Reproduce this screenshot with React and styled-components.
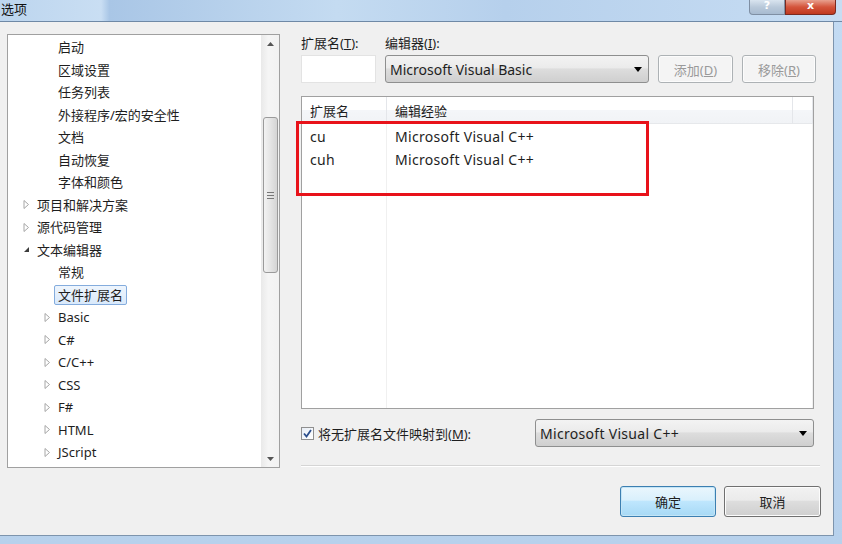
import React from 'react';
import styled, { createGlobalStyle } from 'styled-components';

const GlobalStyle = createGlobalStyle`
  html, body {
    margin: 0;
    padding: 0;
    width: 842px;
    height: 544px;
    overflow: hidden;
    font-family: "Noto Sans", "Noto Sans CJK SC", sans-serif;
    font-size: 13px;
    color: #1e1e1e;
  }
`;

const Frame = styled.div`
  width: 842px;
  height: 544px;
  background: linear-gradient(180deg, #c3dbf3 0%, #b7d1ec 100%);
  display: flex;
  flex-direction: column;
  overflow: hidden;
`;

const TitleBar = styled.div`
  height: 21px;
  display: flex;
  align-items: flex-start;
  justify-content: space-between;
  background: linear-gradient(90deg, #bcd5ee 0%, #c9def3 12%, #a9c6e6 13%, #c4dbf1 40%, #b6d0ec 60%, #c7ddf3 100%);
  border-bottom: 1px solid #6f89a6;
`;

const Title = styled.span`
  font-size: 13px;
  line-height: 18px;
  color: #111;
  margin-left: 1px;
`;

const CaptionButtons = styled.div`
  display: flex;
  margin-right: 6px;
`;

const CaptionButton = styled.div`
  width: ${p => p.$w}px;
  height: 14px;
  border: 1px solid ${p => (p.$close ? '#7a2a20' : '#7f8fa3')};
  border-top: none;
  border-radius: ${p => (p.$close ? '0 0 4px 0' : '0 0 0 4px')};
  background: ${p => (p.$close
    ? 'linear-gradient(180deg, #e8a08e 0%, #d4543b 50%, #c0391f 100%)'
    : 'linear-gradient(180deg, #d9e4ef 0%, #b9c9da 50%, #a8bbd0 100%)')};
  color: #fff;
  font-size: 11px;
  font-weight: bold;
  line-height: 12px;
  text-align: center;
  font-family: "DejaVu Sans", sans-serif;
`;

const Body = styled.div`
  flex: 0 0 514px;
  width: 834px;
  background: #f0f0f0;
  border-right: 1px solid #7d94ad;
  border-bottom: 1px solid #7d94ad;
  display: flex;
  padding: 12px 0 0 7px;
  box-sizing: border-box;
  gap: 21px;
`;

const TreePanel = styled.div`
  width: 273px;
  height: 434px;
  border: 1px solid #a0a0a0;
  background: #fff;
  display: flex;
  box-sizing: border-box;
`;

const TreeList = styled.div`
  flex: 1;
  padding-top: 1px;
  overflow: hidden;
`;

const TreeRow = styled.div`
  height: 22.5px;
  display: flex;
  align-items: center;
  padding-left: ${p => p.$indent}px;
  white-space: nowrap;
`;

const Arrow = styled.span`
  width: 13px;
  display: inline-flex;
  justify-content: center;
  align-items: center;
  margin-right: ${p => p.$gap}px;
`;

const TreeLabel = styled.span`
  padding: 1px 3px;
  margin-left: -4px;
  border: 1px solid ${p => (p.$selected ? '#84acdd' : 'transparent')};
  border-radius: 2px;
  background: ${p => (p.$selected ? 'linear-gradient(180deg, #eef5fd 0%, #d9e9fb 100%)' : 'transparent')};
  line-height: 16px;
`;

const ScrollBar = styled.div`
  width: 18px;
  background: linear-gradient(90deg, #e9e9e9 0%, #f5f5f5 40%, #f2f2f2 100%);
  display: flex;
  flex-direction: column;
  align-items: center;
`;

const ScrollArrow = styled.div`
  height: 17px;
  display: flex;
  align-items: center;
  justify-content: center;
  width: 100%;
`;

const ScrollTrack = styled.div`
  flex: 1;
  width: 100%;
  display: flex;
  flex-direction: column;
  align-items: center;
  padding-top: 65px;
  box-sizing: border-box;
`;

const Thumb = styled.div`
  width: 15px;
  height: 156px;
  border: 1px solid #9a9a9a;
  border-radius: 3px;
  background: linear-gradient(90deg, #f2f2f2 0%, #e4e4e4 50%, #d4d4d4 100%);
  box-sizing: border-box;
  display: flex;
  align-items: center;
  justify-content: center;
`;

const Grip = styled.div`
  width: 7px;
  height: 7px;
  background: repeating-linear-gradient(180deg, #777 0 1px, transparent 1px 3px);
`;

const RightPanel = styled.div`
  width: 520px;
  display: flex;
  flex-direction: column;
`;

const TopRow = styled.div`
  display: flex;
  gap: 9px;
  align-items: flex-end;
`;

const Field = styled.div`
  display: flex;
  flex-direction: column;
  gap: 3px;
`;

const Label = styled.span`
  line-height: 18px;
  white-space: nowrap;
`;

const Key = styled.span`
  text-decoration: underline;
`;

const TextInput = styled.div`
  width: 75px;
  height: 28px;
  background: #fff;
  border: 1px solid #e3e3e3;
  box-sizing: border-box;
`;

const Combo = styled.div`
  width: ${p => p.$w}px;
  height: 28px;
  box-sizing: border-box;
  border: 1px solid #8e8f8f;
  border-radius: 3px;
  background: linear-gradient(180deg, #f3f3f3 0%, #ebebeb 45%, #dddddd 50%, #cfcfcf 100%);
  display: flex;
  align-items: center;
  justify-content: space-between;
  padding: 0 6px 0 4px;
  font-size: 14px;
  letter-spacing: ${p => p.$spacing || 0}px;
  white-space: nowrap;
`;

const ComboArrow = styled.span`
  width: 0;
  height: 0;
  border-left: 4px solid transparent;
  border-right: 4px solid transparent;
  border-top: 5px solid #000;
`;

const Button = styled.div`
  width: ${p => p.$w}px;
  height: ${p => p.$h}px;
  box-sizing: border-box;
  border: 1px solid ${p => (p.$default ? '#3c7fb1' : p.$disabled ? '#adb2b5' : '#707070')};
  border-radius: 3px;
  background: ${p => (p.$disabled
    ? '#f4f4f4'
    : p.$default
      ? 'linear-gradient(180deg, #eaf6fd 0%, #d9f0fc 45%, #bee6fd 50%, #a7d9f5 100%)'
      : 'linear-gradient(180deg, #f2f2f2 0%, #ebebeb 45%, #dddddd 50%, #cfcfcf 100%)')};
  box-shadow: ${p => (p.$default ? 'inset 0 0 0 1px #c4e5f6' : 'inset 0 0 0 1px #fcfcfc')};
  color: ${p => (p.$disabled ? '#9a9a9a' : '#1e1e1e')};
  display: flex;
  align-items: center;
  justify-content: center;
  white-space: nowrap;
`;

const ListView = styled.div`
  position: relative;
  margin-top: 13px;
  width: 513px;
  height: 313px;
  border: 1px solid #a0a0a0;
  background: #fff;
  box-sizing: border-box;
  display: grid;
  grid-template-columns: 85px 406px 1fr;
  grid-template-rows: 27px 24px 23px 1fr;
`;

const HeaderCell = styled.div`
  background: linear-gradient(180deg, #ffffff 0%, #ffffff 50%, #f4f6f9 51%, #f1f3f6 100%);
  border-right: 1px solid #e4e6ea;
  border-bottom: 1px solid #e6e8eb;
  display: flex;
  align-items: center;
  padding-left: 8px;
`;

const Cell = styled.div`
  display: flex;
  align-items: center;
  padding-left: 8px;
  font-size: 14px;
  letter-spacing: 0.3px;
  border-right: 1px solid ${p => (p.$line ? '#f0f0f0' : 'transparent')};
`;

const Filler = styled.div`
  border-right: 1px solid #f0f0f0;
`;

const Highlight = styled.div`
  position: absolute;
  left: -6px;
  top: 24px;
  width: 353px;
  height: 75px;
  border: 3px solid #e8121a;
  box-sizing: border-box;
  pointer-events: none;
`;

const MapRow = styled.div`
  margin-top: 10px;
  display: flex;
  align-items: center;
  justify-content: space-between;
  width: 513px;
`;

const CheckLabel = styled.label`
  display: flex;
  align-items: center;
  gap: 4px;
  white-space: nowrap;
`;

const CheckBox = styled.span`
  width: 13px;
  height: 13px;
  box-sizing: border-box;
  border: 1px solid #8f8f8f;
  background: linear-gradient(135deg, #e8eef6 0%, #fff 100%);
  display: inline-flex;
  align-items: center;
  justify-content: center;
`;

const Separator = styled.div`
  margin-top: 18px;
  width: 519px;
  height: 1px;
  background: #d5d5d5;
  border-bottom: 1px solid #fff;
`;

const ButtonRow = styled.div`
  margin-top: 19px;
  width: 520px;
  display: flex;
  justify-content: flex-end;
  gap: 8px;
`;

const treeItems = [
  { text: '启动', level: 2 },
  { text: '区域设置', level: 2 },
  { text: '任务列表', level: 2 },
  { text: '外接程序/宏的安全性', level: 2 },
  { text: '文档', level: 2 },
  { text: '自动恢复', level: 2 },
  { text: '字体和颜色', level: 2 },
  { text: '项目和解决方案', level: 1, arrow: 'closed' },
  { text: '源代码管理', level: 1, arrow: 'closed' },
  { text: '文本编辑器', level: 1, arrow: 'open' },
  { text: '常规', level: 2 },
  { text: '文件扩展名', level: 2, selected: true },
  { text: 'Basic', level: 2, arrow: 'closed' },
  { text: 'C#', level: 2, arrow: 'closed' },
  { text: 'C/C++', level: 2, arrow: 'closed' },
  { text: 'CSS', level: 2, arrow: 'closed' },
  { text: 'F#', level: 2, arrow: 'closed' },
  { text: 'HTML', level: 2, arrow: 'closed' },
  { text: 'JScript', level: 2, arrow: 'closed' },
];

const TreeArrow = ({ type }) => (
  type === 'open' ? (
    <svg width="7" height="7" viewBox="0 0 7 7">
      <path d="M6 1 L6 6 L1 6 Z" fill="#3c3c3c" />
    </svg>
  ) : (
    <svg width="7" height="9" viewBox="0 0 7 9">
      <path d="M1 0.5 L5.5 4.5 L1 8.5 Z" fill="#fff" stroke="#a6a6a6" />
    </svg>
  )
);

const Tree = () => (
  <TreePanel>
    <TreeList>
      {treeItems.map(item => {
        const textX = item.level === 1 ? 29 : 50;
        return (
          <TreeRow key={item.text} $indent={item.arrow ? textX - 17 : textX}>
            {item.arrow && (
              <Arrow $gap={4}><TreeArrow type={item.arrow} /></Arrow>
            )}
            <TreeLabel $selected={item.selected}>{item.text}</TreeLabel>
          </TreeRow>
        );
      })}
    </TreeList>
    <ScrollBar>
      <ScrollArrow>
        <svg width="7" height="4" viewBox="0 0 7 4"><path d="M0 4 L3.5 0 L7 4 Z" fill="#555" /></svg>
      </ScrollArrow>
      <ScrollTrack>
        <Thumb><Grip /></Thumb>
      </ScrollTrack>
      <ScrollArrow>
        <svg width="7" height="4" viewBox="0 0 7 4"><path d="M0 0 L7 0 L3.5 4 Z" fill="#555" /></svg>
      </ScrollArrow>
    </ScrollBar>
  </TreePanel>
);

export default function App() {
  return (
    <Frame>
      <GlobalStyle />
      <TitleBar>
        <Title>选项</Title>
        <CaptionButtons>
          <CaptionButton $w={34}>?</CaptionButton>
          <CaptionButton $w={49} $close>x</CaptionButton>
        </CaptionButtons>
      </TitleBar>
      <Body>
        <Tree />
        <RightPanel>
          <TopRow>
            <Field>
              <Label>扩展名(<Key>T</Key>):</Label>
              <TextInput />
            </Field>
            <Field>
              <Label>编辑器(<Key>I</Key>):</Label>
              <Combo $w={264}>
                <span>Microsoft Visual Basic</span>
                <ComboArrow />
              </Combo>
            </Field>
            <Button $w={75} $h={28} $disabled><span>添加(<Key>D</Key>)</span></Button>
            <Button $w={74} $h={28} $disabled><span>移除(<Key>R</Key>)</span></Button>
          </TopRow>
          <ListView>
            <HeaderCell>扩展名</HeaderCell>
            <HeaderCell>编辑经验</HeaderCell>
            <HeaderCell />
            <Cell $line>cu</Cell>
            <Cell>Microsoft Visual C++</Cell>
            <Filler />
            <Cell $line>cuh</Cell>
            <Cell>Microsoft Visual C++</Cell>
            <Filler />
            <Cell $line />
            <Cell />
            <Filler />
            <Highlight />
          </ListView>
          <MapRow>
            <CheckLabel>
              <CheckBox>
                <svg width="9" height="9" viewBox="0 0 9 9">
                  <path d="M1 4.5 L3.5 7.5 L8 1" fill="none" stroke="#2b4e8c" strokeWidth="1.8" />
                </svg>
              </CheckBox>
              <span>将无扩展名文件映射到(<Key>M</Key>):</span>
            </CheckLabel>
            <Combo $w={279} $spacing={0.3}>
              <span>Microsoft Visual C++</span>
              <ComboArrow />
            </Combo>
          </MapRow>
          <Separator />
          <ButtonRow>
            <Button $w={96} $h={31} $default>确定</Button>
            <Button $w={97} $h={31}>取消</Button>
          </ButtonRow>
        </RightPanel>
      </Body>
    </Frame>
  );
}
